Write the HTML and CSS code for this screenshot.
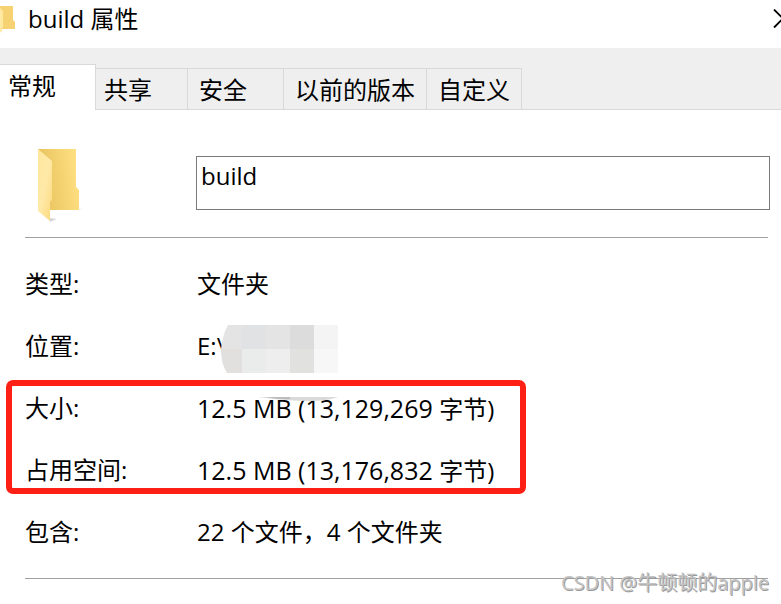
FILE: index.html
```html
<!DOCTYPE html>
<html lang="zh-CN">
<head>
<meta charset="utf-8">
<title>build 属性</title>
<link rel="stylesheet" href="styles.css">
</head>
<body>
<header class="titlebar">
  <svg class="title-icon" width="16" height="28" viewBox="0 0 16 28" aria-hidden="true">
    <path d="M0 0H13V14L15 16V23H0Z" fill="#f6d272"/>
    <path d="M0 2L3 5V21L2 22V27L0 25Z" fill="#ffe9a2"/>
  </svg>
  <h1 class="title">build 属性</h1>
  <button class="close" type="button" aria-label="关闭">
    <svg width="8" height="20" viewBox="0 0 8 20" aria-hidden="true">
      <path d="M1 0.500L19 18.500M1 18.500L19 0.500" fill="none" stroke="#000" stroke-width="1.800"/>
    </svg>
  </button>
</header>
<nav class="tabs" role="tablist">
  <button class="tab active" type="button" role="tab" aria-selected="true">常规</button>
  <button class="tab sharing" type="button" role="tab">共享</button>
  <button class="tab security" type="button" role="tab">安全</button>
  <button class="tab" type="button" role="tab">以前的版本</button>
  <button class="tab" type="button" role="tab">自定义</button>
  <span class="tab-rest"></span>
</nav>
<main class="panel">
  <section class="identity">
    <svg class="folder" width="52" height="76" viewBox="0 0 52 76" aria-hidden="true">
      <defs>
        <linearGradient id="back" x1="0" y1="0.600" x2="1" y2="0.400">
          <stop offset="0" stop-color="#e6c15b"/><stop offset="1" stop-color="#ffe082"/>
        </linearGradient>
        <linearGradient id="front" x1="0" y1="0" x2="1" y2="1">
          <stop offset="0" stop-color="#ffe79c"/><stop offset="0.500" stop-color="#ffe9a8"/><stop offset="1" stop-color="#fbd97c"/>
        </linearGradient>
        <linearGradient id="shade" x1="0" y1="0" x2="1" y2="0">
          <stop offset="0" stop-color="#d5d5d5"/><stop offset="1" stop-color="#fff"/>
        </linearGradient>
      </defs>
      <path d="M41 58L47 59L41 62ZM12 69L19 70L12 73Z" fill="url(#shade)"/>
      <path d="M0 0H38V38L41 41V61H0Z" fill="url(#back)"/>
      <path d="M0 0L14 12V51L12 53V72L0 62Z" fill="url(#front)"/>
    </svg>
    <input class="name" type="text" value="build" aria-label="名称">
  </section>
  <dl class="details">
    <div class="row"><dt>类型:</dt><dd>文件夹</dd></div>
    <div class="row">
      <dt>位置:</dt>
      <dd class="location">E:\
        <svg class="mosaic" width="118" height="78" viewBox="0 0 118 78" aria-hidden="true">
          <path d="M7 0H21V24H0Q2 8 7 0Z" fill="#e5e4e4"/>
          <path d="M0 24H21V48H6Q0 39 0 24Z" fill="#e1e0df"/>
          <path d="M21 0H45V24H21Z" fill="#e1e2e4"/>
          <path d="M45 0H69V24H45Z" fill="#e4e4e5"/>
          <path d="M69 0H93V24H69Z" fill="#dcdcdc"/>
          <path d="M93 0H117V24H93Z" fill="#f4f4f4"/>
          <path d="M21 24H45V48H21Z" fill="#eaeceb"/>
          <path d="M45 24H69V48H45Z" fill="#eeeeee"/>
          <path d="M69 24H93V48H69Z" fill="#e1e1e0"/>
          <path d="M93 24H117V48H93Z" fill="#f7f7f7"/>
          <path d="M37 72H117Q106 76 90 76Q66 76 37 72Z" fill="#dadada"/>
          <path d="M45 72H69V74H56Z" fill="#bcbcbc"/>
        </svg>
      </dd>
    </div>
    <div class="marked">
      <div class="row"><dt>大小:</dt><dd><span class="figure">12.5 MB (13,129,269 </span>字节)</dd></div>
      <div class="row"><dt>占用空间:</dt><dd><span class="figure">12.5 MB (13,176,832 </span>字节)</dd></div>
    </div>
    <div class="row"><dt>包含:</dt><dd>22 个文件，4 个文件夹</dd></div>
  </dl>
  <footer class="watermark">CSDN @牛顿顿的apple</footer>
</main>
</body>
</html>
```
FILE: styles.css
```css
*, *::after { box-sizing: border-box; }

body {
  margin: 0;
  background: #fff;
  color: #000;
  font: 24px/32px "Open Sans", "Noto Sans CJK SC", sans-serif;
  overflow-x: hidden;
}

button, input { font: inherit; color: inherit; }

.titlebar {
  display: flex;
  align-items: flex-start;
  height: 48px;
}

.title-icon { margin-top: 6px; }

.title {
  flex: 1;
  margin: 3px 0 0 12px;
  font-size: 24px;
  font-weight: 400;
}

.close {
  display: flex;
  margin-top: 9px;
  padding: 0;
  border: 0;
  background: none;
}

.tabs {
  display: flex;
  align-items: flex-end;
  height: 62px;
  background: #efefef;
}

.tab {
  height: 42px;
  padding: 2px 11px 0;
  border: 1px solid #d9d9d9;
  border-left: 0;
  background: #efefef;
  text-align: left;
  white-space: nowrap;
}

.active {
  width: 96px;
  height: 46px;
  padding: 0 8px 4px;
  border-bottom: 0;
  background: #fff;
}

.sharing { width: 92px; padding-left: 8px; }

.security { width: 96px; }

.tab-rest {
  flex: 1;
  border-bottom: 1px solid #d9d9d9;
}

.panel { padding: 0 12px 0 25px; }

.identity {
  display: flex;
  align-items: flex-start;
  height: 128px;
  margin-right: 1px;
  padding: 39px 0 0 13px;
  border-bottom: 1px solid #a0a0a0;
}

.folder { flex: none; }

.name {
  flex: 1;
  min-width: 0;
  height: 54px;
  margin: 7px -2px 0 106px;
  padding: 0 4px 16px;
  border: 1px solid #7a7a7a;
  border-radius: 0;
  background: #fff;
  outline: 0;
}

.details {
  margin: 0 1px 0 0;
  padding: 15px 0;
  border-bottom: 1px solid #a0a0a0;
}

.row {
  display: grid;
  grid-template-columns: 172px 1fr;
  align-items: center;
  height: 62px;
  white-space: nowrap;
}

dd { margin: 0; }

.location { position: relative; }

.mosaic {
  position: absolute;
  z-index: 1;
  top: -5px;
  left: 24px;
}

.marked { position: relative; }

.marked::after {
  content: "";
  position: absolute;
  top: 3px;
  bottom: 7px;
  left: -19px;
  width: 520px;
  border: 6px solid #ff2015;
  border-radius: 7px;
}

.figure {
  font-size: 25px;
  white-space: pre;
}

.watermark {
  position: relative;
  height: 37px;
  margin-top: -12px;
  color: #c4c4c4;
  font-size: 20px;
  text-align: right;
  text-shadow: 1px 1px 0 #999;
}
```
